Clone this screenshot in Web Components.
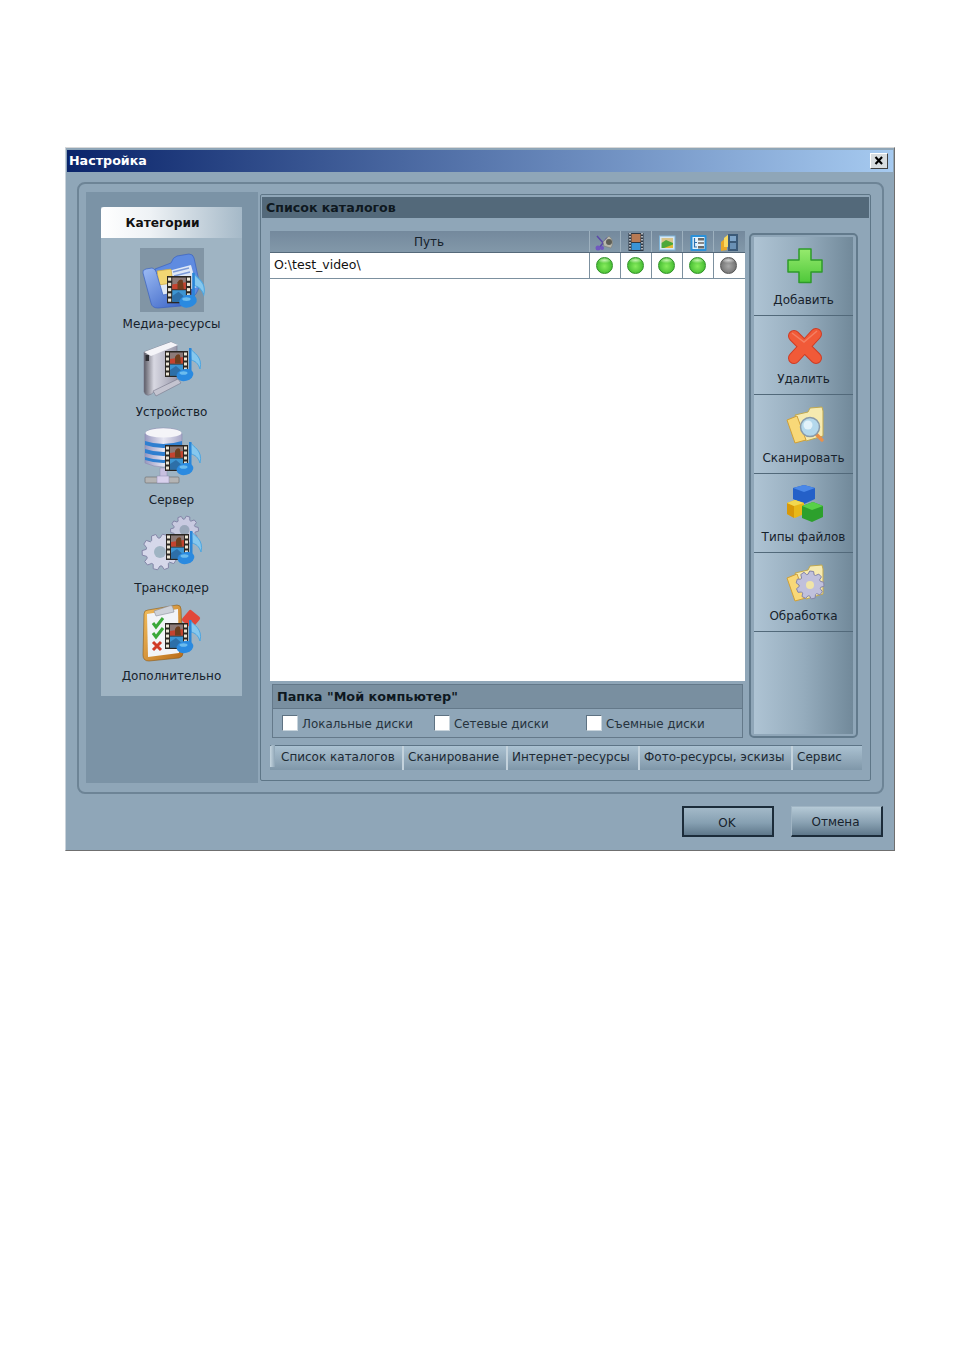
<!DOCTYPE html>
<html lang="ru">
<head>
<meta charset="utf-8">
<title>Настройка</title>
<style>
html, body { margin: 0; background: #fff; }
body { padding: 147px 0 0 65px; height: 1217px; overflow: hidden; font-family: "DejaVu Sans", sans-serif; }
</style>
</head>
<body>
<settings-window>
  <category-panel slot="left">
    <category-item label="Медиа-ресурсы" icon="media" selected></category-item>
    <category-item label="Устройство" icon="device"></category-item>
    <category-item label="Сервер" icon="server"></category-item>
    <category-item label="Транскодер" icon="gears"></category-item>
    <category-item label="Дополнительно" icon="clipboard"></category-item>
  </category-panel>
  <catalog-page slot="right"></catalog-page>
</settings-window>

<script>
const FONT = '"DejaVu Sans", sans-serif';

// film + music note, sits on top of all the category icons
function filmNote(x, y, s) {
  s = s || 1;
  let holes = '';
  for (let i = 0; i < 5; i++) {
    holes += `<rect x="1" y="${1.5 + i * 5}" width="3" height="3"/><rect x="19" y="${1.5 + i * 5}" width="3" height="3"/>`;
  }
  return `<g transform="translate(${x},${y}) scale(${s})">
    <path d="M25 -3 C28 2 38 5 35 18 C33 12 30 10 26 9Z" fill="#86c8ee" stroke="#4ea6e0" stroke-width="1"/>
    <rect x="0" y="0" width="23" height="26" fill="#2a2622"/>
    <rect x="5" y="1.500" width="13" height="11" fill="#8c7a78"/>
    <rect x="5" y="13.500" width="13" height="11" fill="#3d95d2"/>
    <path d="M5 8 L18 6 V12.500 H5Z" fill="#c4432f"/>
    <path d="M10 12.500 V6 Q12 2 15 4 L16 12.500Z" fill="#6e3f1f"/>
    <path d="M5 19 L11 15 L18 21 V24.500 H5Z" fill="#2d6fa8"/>
    <g fill="#ece6d6">${holes}</g>
    <rect x="24" y="-3" width="2.500" height="25" fill="#2a86d8"/>
    <ellipse cx="20" cy="24" rx="8.500" ry="6" fill="#2a8ae0" transform="rotate(-14 20 24)"/>
    <ellipse cx="18.500" cy="22" rx="4" ry="1.800" fill="#6cbcee"/>
  </g>`;
}

function gearPath(cx, cy, r, teeth) {
  let d = '';
  const step = Math.PI * 2 / teeth;
  for (let i = 0; i < teeth; i++) {
    const a = i * step;
    const pts = [[-0.5, 0.78], [-0.28, 1], [0.12, 1], [0.3, 0.78]];
    pts.forEach((p, n) => {
      const an = a + p[0] * step, rr = r * p[1];
      d += (i === 0 && n === 0 ? 'M' : 'L') + (cx + rr * Math.cos(an)).toFixed(1) + ' ' + (cy + rr * Math.sin(an)).toFixed(1) + ' ';
    });
  }
  return d + 'Z';
}

const ICONS = {
  media: `
    <defs><linearGradient id="a" x1="0" y1="0" x2="1" y2="1"><stop offset="0" stop-color="#9dbcf4"/><stop offset="1" stop-color="#2f59c0"/></linearGradient></defs>
    <path d="M12 18 L28 12 Q30 6 34 5 L46 3 Q50 3 51 7 L56 30 Q57 40 50 46 L20 52Z" fill="#5f8be0" stroke="#3a62c0" stroke-width=".7"/>
    <path d="M10 24 L48 14 L54 36 L20 50Z" fill="#dfe8f6"/>
    <path d="M30 21 L46 17 M31 25 L47 21" stroke="#7c9ad8" stroke-width="1.500"/>
    <rect x="15" y="19" width="14" height="14" fill="#f2d673" stroke="#d0aa44" stroke-width=".7" transform="rotate(-8 22 26)"/>
    <path d="M0 22 Q-1 19 3 18 L9 17 Q13 18 14 24 L20 44 L48 38 Q50 38 49 42 L44 52 Q42 55 38 55 L15 57 Q9 57 8 52Z" fill="url(#a)" stroke="#3a62c0" stroke-width=".7"/>
    ${filmNote(24, 25, 1.05)}`,
  device: `
    <defs><linearGradient id="d" x1="0" y1="0" x2="1" y2="0"><stop offset="0" stop-color="#5c5c66"/><stop offset=".3" stop-color="#d8d8e2"/><stop offset="1" stop-color="#9a9aac"/></linearGradient></defs>
    <path d="M1 13 L28 3 L34 6 L34 41 L12 52 Q4 60 1 53Z" fill="url(#d)" stroke="#77778a" stroke-width=".6"/>
    <path d="M1 13 L28 3 L35 6 L8 17Z" fill="#f4f4f8"/>
    <rect x="2.500" y="16" width="3.500" height="6" fill="#2e2e34"/>
    <path d="M10 52 L35 40 L38 44 L13 57Z" fill="#c4c4d0" stroke="#77778a" stroke-width=".6"/>
    ${filmNote(22, 12)}`,
  server: `
    <defs><linearGradient id="s" x1="0" y1="0" x2="1" y2="0"><stop offset="0" stop-color="#9898c0"/><stop offset=".5" stop-color="#e6e6f2"/><stop offset="1" stop-color="#a8a8c8"/></linearGradient></defs>
    <path d="M2 7 Q4 1 20 1 Q37 1 39 7 L39 36 Q20 44 2 36Z" fill="url(#s)" stroke="#8c8cae" stroke-width=".6"/>
    <ellipse cx="20.500" cy="6" rx="18" ry="4.500" fill="#f4f4f8"/>
    <path d="M2 14 Q20 20 39 14 V18 Q20 24 2 18Z M2 22 Q20 28 39 22 V26 Q20 32 2 26Z M2 30 Q20 36 39 30 V33 Q20 39 2 33Z" fill="#2f7fd0"/>
    <rect x="17" y="41" width="7" height="9" fill="#c8c0e0" stroke="#8c8cae" stroke-width=".5"/>
    <rect x="2" y="50" width="34" height="6" rx="1" fill="#b4b4b4" stroke="#6a6a6a" stroke-width=".6"/>
    <rect x="14" y="49" width="12" height="7" fill="#d8d0ec" stroke="#8c8cae" stroke-width=".5"/>
    ${filmNote(22, 18)}`,
  gears: `
    <path d="${gearPath(41.5, 15, 14, 10)}" fill="#c8cae0" stroke="#8486a8"/>
    <circle cx="41.500" cy="15" r="5" fill="#9aa8ba"/>
    <path d="${gearPath(17, 37, 18, 10)}" fill="#d6d8ea" stroke="#8486a8"/>
    <circle cx="17" cy="37" r="6" fill="#9fb4c3"/>
    ${filmNote(23, 19)}`,
  clipboard: `
    <defs><linearGradient id="c" x1="0" y1="0" x2="1" y2="1"><stop offset="0" stop-color="#f4c060"/><stop offset="1" stop-color="#b86a18"/></linearGradient></defs>
    <path d="M1 11 Q1 7 5 7 L34 2 Q38 2 38 6 L40 50 Q40 54 36 55 L6 58 Q0 58 0 52Z" fill="url(#c)" stroke="#8a5a1a" stroke-width=".6"/>
    <path d="M4 11 L35 6 L36 50 L5 54Z" fill="#f2f4f8"/>
    <path d="M11 8 L26 3 Q29 1 30 5 L31 9 L13 13Z" fill="#ced2da" stroke="#8a8e9a" stroke-width=".6"/>
    <path d="M10 20 L13 24 L20 15 M10 30 L13 34 L20 25" fill="none" stroke="#3aa83a" stroke-width="3"/>
    <path d="M10 39 L18 47 M18 39 L10 47" stroke="#d03a28" stroke-width="3"/>
    <rect x="41" y="9" width="14" height="14" rx="2" transform="rotate(40 48 16)" fill="#e2483a"/>
    ${filmNote(22, 20)}`,
  add: `
    <defs><linearGradient id="p" x1="0" y1="0" x2="0" y2="1"><stop offset="0" stop-color="#96ea6e"/><stop offset="1" stop-color="#4fc83a"/></linearGradient></defs>
    <path d="M13 0 H25 V11 H36 V23 H25 V33.500 H13 V23 H2 V11 H13Z" fill="url(#p)" stroke="#2e9a2a" stroke-width="1.500" stroke-linejoin="round"/>`,
  remove: `
    <path d="M8 8 L30 30 M30 6 L8 30" stroke="#cf3a22" stroke-width="12" stroke-linecap="round"/>
    <path d="M8 8 L30 30 M30 6 L8 30" stroke="#f15a38" stroke-width="10" stroke-linecap="round"/>
    <path d="M6 5 L18 14 L31 3" fill="none" stroke="#f47f62" stroke-width="1.500"/>`,
  scan: `
    <path d="M9 8 L22 5 L24 1 L36 0 L37 4 V29 L20 34Z" fill="#f6eab0" stroke="#c0a850"/>
    <path d="M1 13 L11 9 L20 33 L9 36Z" fill="#f8d878" stroke="#d0a038"/>
    <path d="M30 27 L36 33" stroke="#e8904a" stroke-width="3.500" stroke-linecap="round"/>
    <circle cx="24" cy="20" r="9.500" fill="#b4d8ec" stroke="#8a9aa8" stroke-width="1.500"/>
    <circle cx="22" cy="18" r="4.500" fill="#e2f2fa"/>`,
  types: `
    <path d="M7 2 L18 -1 L29 2 L29 13 L18 18 L7 13Z" fill="#2460c8"/>
    <path d="M7 2 L18 -1 L29 2 L18 6Z" fill="#4a88e8"/>
    <path d="M1 17 L9 14 L18 17 L18 28 L9 32 L1 28Z" fill="#e8b818"/>
    <path d="M1 17 L8 20 L8 32 L1 28Z" fill="#d89808"/>
    <path d="M1 17 L9 14 L18 17 L8 20Z" fill="#f2d850"/>
    <path d="M16 20 L27 16 L37 20 L37 31 L26 36 L16 32Z" fill="#2ca02c"/>
    <path d="M16 20 L27 16 L37 20 L26 24Z" fill="#58d048"/>`,
  process: `
    <path d="M9 8 L22 5 L24 1 L36 0 L37 4 V29 L20 34Z" fill="#f6eab0" stroke="#c0a850"/>
    <path d="M1 13 L11 9 L20 33 L9 36Z" fill="#f8d878" stroke="#d0a038"/>
    <path d="${gearPath(24, 20, 14, 9)}" fill="#c0c0dc" stroke="#8484a8"/>
    <circle cx="24" cy="20" r="4" fill="#f0e4a8"/>`,
  audio: `
    <path d="M1 3 L9 12 M11 5 L3 15" stroke="#5a48a8" stroke-width="1.500"/>
    <circle cx="2" cy="15" r="2.500" fill="#7058c0"/><circle cx="6" cy="15" r="2" fill="#7058c0"/>
    <path d="M7 9 L13 3 Q19 8 15 15 L8 13Z" fill="#b8b8ae" stroke="#77776e" stroke-width=".5"/>
    <circle cx="13" cy="9" r="3" fill="#5e5e56"/>`,
  film: `
    <rect x="1.500" y="0" width="15" height="18" fill="#2f3844"/>
    <rect x="4.500" y="1" width="9" height="8" fill="#b87a54"/><rect x="4.500" y="10" width="9" height="7" fill="#3a94d6"/>
    <path d="M3 0 V18 M15 0 V18" stroke="#d8dce2" stroke-width="1.500" stroke-dasharray="1.500 1.500"/>`,
  photo: `
    <rect x="1.500" y="3" width="15.500" height="14" fill="#d8e8f4" stroke="#7fb4d8" stroke-width="1"/>
    <rect x="3.500" y="5" width="11.500" height="5" fill="#d8c48a"/>
    <path d="M3.500 10 L8 7 L15 10 V15 H3.500Z" fill="#4ca83a"/>
    <path d="M6 15 L15 11.500 V15Z" fill="#e0b838"/>`,
  tree: `
    <rect x="1.500" y="2" width="16" height="16" rx="1" fill="#2a90d8"/>
    <rect x="3.500" y="4" width="12" height="12" fill="#e4f2fb"/>
    <path d="M5.500 5 V14 H8 M5.500 9.500 H8" fill="none" stroke="#2a70b0" stroke-width="1.200"/>
    <rect x="9" y="5" width="6" height="2.500" fill="#6a6a6a"/><rect x="9" y="9" width="6" height="2" fill="#888"/><rect x="9" y="13" width="6" height="2.500" fill="#6a6a6a"/>`,
  folderfilm: `
    <path d="M1 9 L7 4 V17 L1 18Z" fill="#e8a828"/>
    <path d="M4 5 L9 1 V14 H4Z" fill="#f8d860"/>
    <rect x="8" y="1" width="10" height="17" fill="#3c5a78"/>
    <rect x="10" y="3" width="6" height="5" fill="#7ea4c8"/><rect x="10" y="10" width="6" height="6" fill="#6a90b4"/>`
};

class CategoryPanel extends HTMLElement {
  constructor() {
    super();
    this.attachShadow({mode: 'open'}).innerHTML = `
      <style>
        :host { display: block; width: 141px; height: 489px; background: #9fb4c3; box-sizing: border-box; }
        .head { height: 31px; font: bold 12.200px ${FONT}; color: #111; display: flex; align-items: center; justify-content: center; padding-right: 18px; box-sizing: border-box;
          background: linear-gradient(90deg, #fff 0, #eef2f5 35%, #a5b9c8 100%); border-radius: 3px 3px 0 0; }
        .list { display: flex; flex-direction: column; padding-top: 10px; }
      </style>
      <div class="head">Категории</div>
      <div class="list"><slot></slot></div>`;
  }
}

class CategoryItem extends HTMLElement {
  constructor() {
    super();
    const icon = this.getAttribute('icon');
    this.attachShadow({mode: 'open'}).innerHTML = `
      <style>
        :host { display: flex; flex-direction: column; align-items: center; height: 88px; font: 12px ${FONT}; color: #17222c; }
        .ic { width: 64px; height: 64px; display: flex; align-items: center; justify-content: center; }
        :host([selected]) .ic { background: #8195a5; }
        svg { width: 58px; height: 58px; display: block; overflow: visible; }
        .lb { margin-top: 4px; line-height: 16px; }
      </style>
      <div class="ic"><svg viewBox="0 0 58 58">${ICONS[icon]}</svg></div>
      <div class="lb">${this.getAttribute('label')}</div>`;
  }
}

class ToolButton extends HTMLElement {
  constructor() {
    super();
    const icon = this.getAttribute('icon');
    this.attachShadow({mode: 'open'}).innerHTML = `
      <style>
        :host { display: flex; flex-direction: column; align-items: center; height: 78px; border-bottom: 1px solid #52697a; font: 12px ${FONT}; color: #17222c; }
        svg { width: 36px; height: 36px; margin-top: 12px; display: block; overflow: visible; }
        .lb { margin-top: 7px; line-height: 16px; white-space: nowrap; }
      </style>
      <svg viewBox="0 0 36 36">${ICONS[icon]}</svg>
      <div class="lb">${this.getAttribute('label')}</div>`;
  }
}

class StatusDot extends HTMLElement {
  constructor() {
    super();
    const off = this.hasAttribute('off');
    const c = off ? ['#a8a8a8', '#6c6c6c', '#555', '#d4d4d4'] : ['#86ec5c', '#3fb82e', '#2e8f26', '#c4f5ae'];
    this.attachShadow({mode: 'open'}).innerHTML = `
      <style>
        :host { display: flex; align-items: center; justify-content: center; width: 31px; height: 100%; box-sizing: border-box; border-left: 1px solid #7c909f; padding-right: 1px; }
        i { width: 17px; height: 17px; border-radius: 50%; display: block; box-sizing: border-box; border: 1px solid ${c[2]};
          background: radial-gradient(ellipse 8px 3px at 50% 15%, ${c[3]}, transparent), radial-gradient(circle at 50% 55%, ${c[0]}, ${c[1]} 80%); }
      </style><i></i>`;
  }
}

class HeadIcon extends HTMLElement {
  constructor() {
    super();
    this.attachShadow({mode: 'open'}).innerHTML = `
      <style>
        :host { display: flex; align-items: center; justify-content: center; width: 31px; height: 100%; box-sizing: border-box; border-left: 1px solid #9db0be; }
        svg { width: 18px; height: 18px; display: block; overflow: visible; }
      </style>
      <svg viewBox="0 0 18 18">${ICONS[this.getAttribute('icon')]}</svg>`;
  }
}

class CheckField extends HTMLElement {
  constructor() {
    super();
    this.attachShadow({mode: 'open'}).innerHTML = `
      <style>
        :host { display: flex; align-items: center; gap: 4px; width: 152px; font: 11.900px ${FONT}; color: #26333d; }
        i { width: 16px; height: 16px; background: #fff; box-sizing: border-box; border: 1px solid #5e7282; border-bottom-color: #c8d4dc; border-right-color: #c8d4dc; display: block; }
        span { position: relative; top: 1px; }
      </style><i></i><span><slot></slot></span>`;
  }
}

class TabStrip extends HTMLElement {
  constructor() {
    super();
    const tabs = [['Список каталогов', 127], ['Сканирование', 104], ['Интернет-ресурсы', 132], ['Фото-ресурсы, эскизы', 153], ['Сервис', 71]];
    this.attachShadow({mode: 'open'}).innerHTML = `
      <style>
        :host { display: flex; height: 25px; padding-left: 5px; width: 592px; font: 12px ${FONT}; color: #1d2a34; position: relative;
          background: linear-gradient(#aac1d1, #93aabb 55%, #7f97a9); border-top: 1px solid #5d7486; box-sizing: border-box; }
        :host::before { content: ""; position: absolute; left: 0; top: -1px; width: 5px; height: 22px; background: linear-gradient(90deg, #c6d6e0, #8ea5b6); border-radius: 3px 0 0 0; }
        .t { box-sizing: border-box; height: 100%; display: flex; align-items: center; padding: 0 0 2px 4px; border-left: 2px solid #c3d2dc; white-space: nowrap; }
        .t:first-child { background: #9cb1c0; border: 1px solid #40586b; border-top: 0; height: 25px; padding: 0 0 2px 5px; margin-top: -1px; }
        .t:nth-child(2) { border-left: 0; padding-left: 6px; }
      </style>
      ${tabs.map(t => `<div class="t" style="width:${t[1]}px">${t[0]}</div>`).join('')}`;
  }
}

class CatalogPage extends HTMLElement {
  constructor() {
    super();
    const tools = [['add', 'Добавить'], ['remove', 'Удалить'], ['scan', 'Сканировать'], ['types', 'Типы файлов'], ['process', 'Обработка']];
    this.attachShadow({mode: 'open'}).innerHTML = `
      <style>
        :host { display: block; flex: none; box-sizing: border-box; width: 611px; height: 587px; margin-top: 2px; border: 1px solid #5e7687; border-radius: 2px; padding: 2px 1px 0; font-family: ${FONT}; }
        .bar { height: 21px; background: #53697a; color: #0e1820; font: bold 12.600px/21px ${FONT}; padding-left: 4px; }
        .main { display: flex; margin: 13px 0 0 8px; }
        .left { width: 475px; }
        .table { height: 450px; background: #fff; display: flex; flex-direction: column; }
        .thead { height: 22px; display: flex; background: linear-gradient(#74899d, #8298a9); font: 12px/23px ${FONT}; color: #16212b; flex: none; border-bottom: 1px solid #55697a; box-sizing: border-box; padding-right: 1px; }
        .thead .path { flex: 1; text-align: center; padding-right: 1px; }
        .row { height: 26px; display: flex; border-bottom: 1px solid #7c909f; box-sizing: border-box; font: 12.500px/23px ${FONT}; color: #111; flex: none; padding-right: 1px; }
        .row .path { flex: 1; padding-left: 4px; }
        .group { width: 471px; height: 54px; margin: 3px 0 0 2px; border: 1px solid #64798a; box-sizing: border-box; }
        .group h3 { margin: 0; height: 23px; font: bold 12.800px/23px ${FONT}; color: #0e1820; padding-left: 4px; background: #798fa0; border-bottom: 1px solid #64798a; }
        .checks { display: flex; padding: 6px 0 0 9px; }
        .tools { width: 109px; height: 505px; margin: 2px 0 0 4px; box-sizing: border-box; border: 2px solid #627a8c; border-radius: 5px; padding: 2px 3px;
          background: linear-gradient(90deg, #b0c5d5, #95acbd 50%, #6f8798); background-clip: content-box; }
        tab-strip { margin: 7px 0 0 8px; }
      </style>
      <div class="bar">Список каталогов</div>
      <div class="main">
        <div class="left">
          <div class="table">
            <div class="thead"><div class="path">Путь</div>
              <head-icon icon="audio"></head-icon><head-icon icon="film"></head-icon><head-icon icon="photo"></head-icon><head-icon icon="tree"></head-icon><head-icon icon="folderfilm"></head-icon>
            </div>
            <div class="row"><div class="path">O:\\test_video\\</div>
              <status-dot></status-dot><status-dot></status-dot><status-dot></status-dot><status-dot></status-dot><status-dot off></status-dot>
            </div>
          </div>
          <div class="group">
            <h3>Папка "Мой компьютер"</h3>
            <div class="checks"><check-field>Локальные диски</check-field><check-field>Сетевые диски</check-field><check-field>Съемные диски</check-field></div>
          </div>
        </div>
        <div class="tools">
          ${tools.map(t => `<tool-button icon="${t[0]}" label="${t[1]}"></tool-button>`).join('')}
        </div>
      </div>
      <tab-strip></tab-strip>`;
  }
}

class SettingsWindow extends HTMLElement {
  constructor() {
    super();
    this.attachShadow({mode: 'open'}).innerHTML = `
      <style>
        :host { display: block; width: 830px; height: 704px; box-sizing: border-box; background: #8fa6b8; border: 1px solid #6f6f6f; border-top-color: #d8d8d8; border-left-color: #c9d2da; padding: 2px 1px 0 1px; }
        .title { height: 22px; display: flex; align-items: center; justify-content: space-between; padding: 0 5px 0 2px; box-sizing: border-box; font: bold 12.700px ${FONT}; color: #fff;
          background: linear-gradient(90deg, #0a246a, #a6caf0); }
        .title > span:first-child { position: relative; top: -1px; }
        .close { width: 18px; height: 16px; box-sizing: border-box; background: #d8dde0; border: 1px solid #404040; border-top-color: #fff; border-left-color: #fff; display: block; }
        .close svg { display: block; width: 100%; height: 100%; }
        .frame { margin: 10px 0 0 10px; width: 807px; height: 612px; box-sizing: border-box; border: 2px solid #6d8496; border-radius: 8px; padding: 8px 11px 10px 7px; display: flex; gap: 2px; }
        .side { width: 172px; height: 591px; background: #7b93a6; padding: 15px 0 0 15px; box-sizing: border-box; flex: none; }
        .foot { display: flex; justify-content: flex-end; gap: 17px; padding: 12px 10px 0 0; }
        .btn { width: 92px; height: 31px; box-sizing: border-box; display: flex; align-items: center; justify-content: center; font: 12px ${FONT}; color: #17222c; padding: 2px 2px 0 0;
          background: linear-gradient(#b5c9d6, #8aa2b3 55%, #5f788b); border: 1px solid #9fb4c3; border-right: 2px solid #1c2c3a; border-bottom: 2px solid #1c2c3a; }
        .btn.def { border: 2px solid #1c2c3a; background: linear-gradient(#a3b9c8, #86a0b2 55%, #5f788b); }
      </style>
      <div class="title"><span>Настройка</span><span class="close"><svg viewBox="0 0 18 16"><path d="M5 3.500 L12.500 11.500 M12.500 3.500 L5 11.500" stroke="#000" stroke-width="2.400"/></svg></span></div>
      <div class="frame">
        <div class="side"><slot name="left"></slot></div>
        <slot name="right"></slot>
      </div>
      <div class="foot"><div class="btn def">OK</div><div class="btn">Отмена</div></div>`;
  }
}

customElements.define('category-panel', CategoryPanel);
customElements.define('category-item', CategoryItem);
customElements.define('tool-button', ToolButton);
customElements.define('status-dot', StatusDot);
customElements.define('head-icon', HeadIcon);
customElements.define('check-field', CheckField);
customElements.define('tab-strip', TabStrip);
customElements.define('catalog-page', CatalogPage);
customElements.define('settings-window', SettingsWindow);
</script>
</body>
</html>
